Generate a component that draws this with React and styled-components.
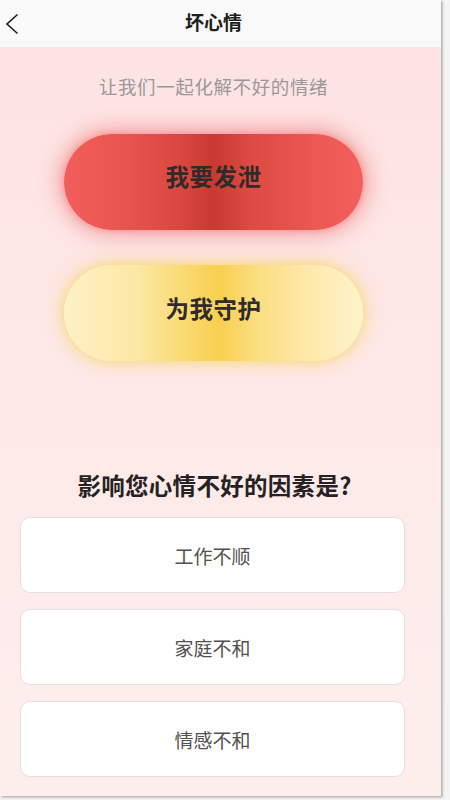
import React from "react";
import styled, { createGlobalStyle } from "styled-components";

const Global = createGlobalStyle`
  html, body { margin: 0; padding: 0; background: #f3f3f3; }
  body { font-family: "Noto Sans CJK SC", "Noto Sans", sans-serif; }
  * { box-sizing: border-box; }
`;

const Frame = styled.div`
  width: 450px;
  height: 800px;
  background: #f4f4f4;
  overflow: hidden;
`;

const Screen = styled.div`
  width: 441px;
  height: 796px;
  display: flex;
  flex-direction: column;
  background: linear-gradient(180deg, #fde2e2 0%, #fde9e8 45%, #fdeeec 100%);
  box-shadow: 2px 1px 2px rgba(0, 0, 0, 0.18), 1px 2px 2px rgba(0, 0, 0, 0.12);
`;

const Header = styled.header`
  height: 47px;
  flex: none;
  display: flex;
  align-items: center;
  justify-content: center;
  position: relative;
  background: #f9f9f9;
  padding: 0 14px 5px 0;
`;

const Back = styled.button`
  position: absolute;
  left: 2px;
  top: 11px;
  width: 20px;
  height: 26px;
  padding: 0;
  border: none;
  background: transparent;
  display: flex;
  align-items: center;
  justify-content: center;
`;

const Title = styled.h1`
  margin: 0;
  font-size: 19px;
  font-weight: 700;
  color: #1e1e1e;
  line-height: 1;
`;

const Main = styled.main`
  flex: 1;
  display: flex;
  flex-direction: column;
  align-items: center;
  padding: 0 14px 0 0;
`;

const Subtitle = styled.p`
  margin: 28px 0 0;
  font-size: 18.5px;
  line-height: 22px;
  color: #9b9797;
  letter-spacing: 0.6px;
`;

const Pill = styled.button`
  width: 299px;
  height: 96px;
  border: none;
  border-radius: 48px;
  margin-top: ${(p) => p.$top}px;
  padding: 0 0 ${(p) => p.$lift}px;
  background: ${(p) => p.$bg};
  box-shadow: ${(p) => p.$glow};
  font-family: inherit;
  font-size: 23.5px;
  font-weight: 700;
  color: #2f2b2b;
  letter-spacing: 0.5px;
  display: flex;
  align-items: center;
  justify-content: center;
`;

const Question = styled.h2`
  margin: 111px 0 0;
  font-size: 23.5px;
  line-height: 26px;
  font-weight: 700;
  color: #262222;
  letter-spacing: 0.3px;
  padding-left: 2px;
`;

const Options = styled.div`
  width: 100%;
  display: flex;
  flex-direction: column;
  gap: 16px;
  padding: 0 22px 0 20px;
  margin-top: 19px;
`;

const Option = styled.button`
  height: 76px;
  background: #ffffff;
  border: 1px solid #e3dfdf;
  border-radius: 10px;
  font-family: inherit;
  font-size: 19px;
  color: #555050;
  display: flex;
  align-items: center;
  justify-content: center;
`;

const RED =
  "linear-gradient(90deg, #f25e5b 0%, #e7544d 22%, #d9463d 40%, #c73a2f 50%, #dc4a41 62%, #ea564f 80%, #f35f5c 100%)";
const YELLOW =
  "linear-gradient(90deg, #fdf1c6 0%, #fce7a4 25%, #fad86c 42%, #f8cf50 52%, #fbdd80 64%, #fde9ab 82%, #fef3cb 100%)";

export default function App() {
  return (
    <>
      <Global />
      <Frame>
        <Screen>
          <Header>
            <Back aria-label="返回">
              <svg width="14" height="22" viewBox="0 0 14 22">
                <polyline points="12.5,1.5 2,11 12.5,20.5" fill="none" stroke="#1e1e1e" strokeWidth="1.6" />
              </svg>
            </Back>
            <Title>坏心情</Title>
          </Header>
          <Main>
            <Subtitle>让我们一起化解不好的情绪</Subtitle>
            <Pill
              $top={37}
              $lift={12}
              $bg={RED}
              $glow="0 0 20px 7px rgba(238, 90, 90, 0.4), 0 0 6px 1px rgba(230, 70, 70, 0.3)"
            >
              我要发泄
            </Pill>
            <Pill
              $top={35}
              $lift={10}
              $bg={YELLOW}
              $glow="0 0 16px 5px rgba(250, 214, 100, 0.5), 0 0 5px 1px rgba(248, 210, 90, 0.35)"
            >
              为我守护
            </Pill>
            <Question>影响您心情不好的因素是?</Question>
            <Options>
              <Option>工作不顺</Option>
              <Option>家庭不和</Option>
              <Option>情感不和</Option>
            </Options>
          </Main>
        </Screen>
      </Frame>
    </>
  );
}
